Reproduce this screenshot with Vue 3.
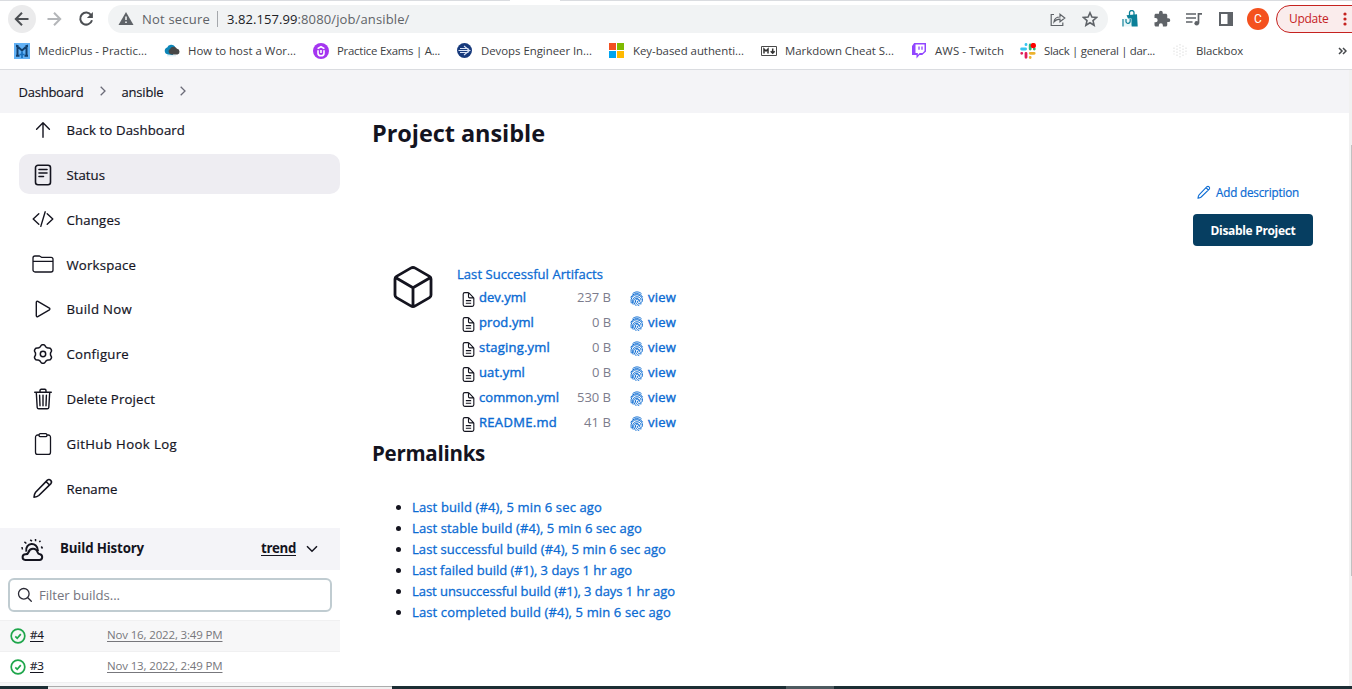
<script setup>
// Tightens or loosens a label so that it occupies its designed width.
const vFit = {
  mounted(el, { value }) {
    const n = el.textContent.trim().length
    el.style.letterSpacing = (value - el.getBoundingClientRect().width) / n + 'px'
  },
}

const gear = (() => {
  const pts = []
  for (let i = 0; i < 72; i++) {
    const t = (i / 72) * Math.PI * 2
    const r = 8.4 + 1.0 * Math.tanh(1.6 * Math.cos(6 * t))
    pts.push((12 + r * Math.sin(t)).toFixed(2) + ' ' + (12 - r * Math.cos(t)).toFixed(2))
  }
  return 'M' + pts.join('L') + 'Z M12 9.3a2.7 2.7 0 100 5.4 2.7 2.7 0 000-5.4z'
})()

const pencil = 'M3 21.2c.2-2.2.6-3.8 1.6-5L16.400 4.100a2.500 2.500 0 013.500 3.500L7.800 19.500c-1.200 1-2.700 1.500-4.800 1.700z M15 5.500l3.500 3.500'

const bookmarks = [
  { icon: 'medic', label: 'MedicPlus - Practic...', w: 109 },
  { icon: 'cloud', label: 'How to host a Wor...', w: 108 },
  { icon: 'udemy', label: 'Practice Exams | A...', w: 103 },
  { icon: 'devops', label: 'Devops Engineer In...', w: 111 },
  { icon: 'ms', label: 'Key-based authenti...', w: 111 },
  { icon: 'md', label: 'Markdown Cheat S...', w: 109 },
  { icon: 'twitch', label: 'AWS - Twitch', w: 69 },
  { icon: 'slack', label: 'Slack | general | dar...', w: 111 },
  { icon: 'blackbox', label: 'Blackbox', w: 47 },
]

const tasks = [
  { label: 'Back to Dashboard', w: 118.5, d: 'M5.600 11.300L12 4.800l6.400 6.500M12 5v14.300' },
  { label: 'Status', w: 38.5, active: true, sw: 1.6, d: 'M7 2.300h10a2.500 2.500 0 012.500 2.500v14.400a2.500 2.500 0 01-2.500 2.500H7a2.500 2.500 0 01-2.500-2.500V4.800A2.500 2.500 0 017 2.300z M8 6.500h8M8 10h8M8 13.500h4.500' },
  { label: 'Changes', w: 54, d: 'M7.800 17.200L2.200 12l5.600-5.200M16.200 17.200l5.600-5.200-5.600-5.200M14.200 4.800L9.800 19.400' },
  { label: 'Workspace', w: 69.5, sw: 1.3, d: 'M2 18V6a2 2 0 012-2h4.500l2 1.300H20a2 2 0 012 2V18a2 2 0 01-2 2H4a2 2 0 01-2-2z M2 9.300h20' },
  { label: 'Build Now', w: 65.5, d: 'M5.300 5.200v13.600c0 .8.800 1.300 1.500.900l11.600-6.900c.6-.4.6-1.200 0-1.600L6.800 4.300c-.7-.4-1.500.1-1.500.900z' },
  { label: 'Configure', w: 62.5, sw: 1.5, d: gear },
  { label: 'Delete Project', w: 88.5, d: 'M5.300 5.500l.9 15c.1.900.7 1.300 1.500 1.300h8.600c.8 0 1.400-.5 1.500-1.300l.9-15M3.700 5.200h16.600M9 5V3.400c0-.6.500-1.100 1.100-1.100h3.800c.6 0 1.100.5 1.100 1.100V5M12 8.300v10.400M8.600 8.300l.4 10.400M15.400 8.300l-.4 10.400' },
  { label: 'GitHub Hook Log', w: 110.5, sw: 1.3, d: 'M15.800 3h1.500a2.200 2.200 0 012.200 2.200v15a2.200 2.200 0 01-2.200 2.200H6.700a2.200 2.200 0 01-2.200-2.200v-15A2.200 2.200 0 016.700 3h1.500M9.300 1.700h5.400a1.200 1.200 0 011.200 1.200v.6a1.200 1.200 0 01-1.200 1.200H9.300a1.200 1.200 0 01-1.200-1.200v-.6a1.200 1.200 0 011.200-1.200z' },
  { label: 'Rename', w: 51, sw: 1.6, d: pencil },
]

const files = [
  { name: 'dev.yml', w: 47, size: '237 B', sw: 34 },
  { name: 'prod.yml', w: 55, size: '0 B', sw: 19 },
  { name: 'staging.yml', w: 71, size: '0 B', sw: 19 },
  { name: 'uat.yml', w: 46, size: '0 B', sw: 19 },
  { name: 'common.yml', w: 80, size: '530 B', sw: 34 },
  { name: 'README.md', w: 78, size: '41 B', sw: 27 },
]

const links = [
  { label: 'Last build (#4), 5 min 6 sec ago', w: 190 },
  { label: 'Last stable build (#4), 5 min 6 sec ago', w: 230 },
  { label: 'Last successful build (#4), 5 min 6 sec ago', w: 254 },
  { label: 'Last failed build (#1), 3 days 1 hr ago', w: 220 },
  { label: 'Last unsuccessful build (#1), 3 days 1 hr ago', w: 263 },
  { label: 'Last completed build (#4), 5 min 6 sec ago', w: 259 },
]

const builds = [
  { id: '#4', date: 'Nov 16, 2022, 3:49 PM' },
  { id: '#3', date: 'Nov 13, 2022, 2:49 PM' },
]
</script>

<template>
  <div class="screen">
    <header class="chrome">
      <div class="tabline"><i class="tab"></i></div>
      <div class="toolbar">
        <span class="round">
          <svg width="28" height="28" viewBox="0 0 28 28" class="nav"><path d="M20.500 14H8.500M14 7.800L7.800 14l6.200 6.200" /></svg>
        </span>
        <svg width="28" height="28" viewBox="0 0 28 28" class="nav fwd"><path d="M7.500 14h12M14 7.800l6.200 6.200-6.200 6.200" /></svg>
        <svg width="28" height="28" viewBox="0 0 28 28" class="nav reload"><path d="M19.200 10.200A6 6 0 1020 15.300" /><path class="solid" d="M20.900 7v6h-6z" /></svg>
        <div class="omnibox">
          <svg width="16" height="14" viewBox="0 0 16 14" class="warn"><path fill="#5f6368" d="M8 0l7.500 13H.5z" /><path stroke="#f1f3f4" stroke-width="1.600" d="M8 4.500V8M8 9.500v1.600" /></svg>
          <span class="notsecure"><span v-fit="68" class="t">Not secure</span></span>
          <i class="bar"></i>
          <span class="url"><b v-fit="70.500" class="t">3.82.157.99</b><span v-fit="112" class="t">:8080/job/ansible/</span></span>
          <svg width="16" height="16" viewBox="0 0 16 16" class="share"><path d="M4 3.500H1.200v11h11.600v-3M4 11c.3-3.500 2.500-5 6-5V3.200L14.800 7 10 10.800V8.200C7.300 8.200 5.500 9 4 11z" /></svg>
          <svg width="16" height="16" viewBox="0 0 16 16" class="star"><path d="M8 1.800l1.900 4.300 4.600.4-3.500 3.100 1.100 4.600L8 11.700l-4.100 2.500 1.100-4.600L1.500 6.500l4.600-.4z" /></svg>
        </div>
        <svg class="ext e1" width="18" height="18" viewBox="0 0 18 18"><path fill="#0b8098" d="M5.500 5.300l10.500-1 .7 12.200h-6z" /><path fill="none" stroke="#0b8098" stroke-width="1.300" d="M8.500 6V3a2 2 0 014.500-.5V6" /><path fill="#e8f6f8" d="M3 8.500h7.500v8H3z" /><path fill="none" stroke="#0b8098" stroke-width="1.200" d="M2 9v7.500M5 9v2.500c0 2.500 4.200 2.500 4.200-.5V9" /></svg>
        <svg class="ext e2" width="18" height="18" viewBox="0 0 24 24"><path fill="#5f6368" d="M20.500 11H19V7c0-1.100-.9-2-2-2h-4V3.500a2.500 2.500 0 00-5 0V5H4c-1.100 0-2 .9-2 2v3.800h1.500a2.700 2.700 0 010 5.400H2V20c0 1.100.9 2 2 2h3.800v-1.500a2.700 2.700 0 015.400 0V22H17c1.100 0 2-.9 2-2v-4h1.500a2.500 2.500 0 000-5z" /></svg>
        <svg class="ext e3" width="18" height="16" viewBox="0 0 18 16"><path fill="none" stroke="#5f6368" stroke-width="1.700" d="M1 3h10M1 7h10M1 11h6.500M13.500 12.500V2.800H17" /><circle cx="11.700" cy="12.300" r="2.300" fill="#5f6368" /></svg>
        <svg class="ext e4" width="14" height="14" viewBox="0 0 14 14"><path fill="none" stroke="#5f6368" stroke-width="2" d="M1 1h12v12H1z" /><path fill="#5f6368" d="M8.500 1H13v12H8.500z" /></svg>
        <span class="avatar">C</span>
        <span class="update"><span v-fit="39.500" class="t">Update</span><svg width="4" height="14" viewBox="0 0 4 14"><g fill="#c5221f"><circle cx="2" cy="2" r="1.600" /><circle cx="2" cy="7" r="1.600" /><circle cx="2" cy="12" r="1.600" /></g></svg></span>
      </div>
      <nav class="bookmarks">
        <span v-for="b in bookmarks" :key="b.label" class="bookmark">
          <svg width="16" height="16" viewBox="0 0 16 16">
            <template v-if="b.icon === 'medic'"><path fill="#62b1f5" d="M0 0h16v16H0z" /><path fill="none" stroke="#123f6d" stroke-width="2" d="M3.500 13V3.500L8 7.500l4.500-4V13M2 3h2.500M11.500 3H14M2 12.800h3.500M10.500 12.800H14" /><path stroke="#176fbd" stroke-width="1.700" d="M8 8.500V15M5.500 11.500h5" /></template>
            <template v-else-if="b.icon === 'cloud'"><path fill="#0c86b8" d="M4 11.500a3.600 3.600 0 01-.8-7A4.500 4.500 0 0111 3.500L9 12z" /><path fill="#474747" d="M7 11.500a3 3 0 01-1-5.500 4 4 0 017-.3 3 3 0 01.5 5.800z" /><path stroke="#d3eaf3" d="M3 12.800h9" /></template>
            <template v-else-if="b.icon === 'udemy'"><circle cx="8" cy="8" r="8" fill="#a435f0" /><path fill="none" stroke="#fff" stroke-width="1.600" d="M5 7.300v2.900c0 3.400 6 3.400 6 0V7.300M4.600 5.600L8 3.700l3.400 1.900M8 7v3" /></template>
            <template v-else-if="b.icon === 'devops'"><circle cx="7.500" cy="7.500" r="7.500" fill="#173a7c" /><path fill="none" stroke="#d9e3f5" stroke-width="1.100" d="M1.500 7.500h12M3 5.500h8.500M3 9.500h8.500M7 3l5.500 4.500L7 12" /></template>
            <template v-else-if="b.icon === 'ms'"><path fill="#f25022" d="M0 0h7v7H0z" /><path fill="#7fba00" d="M8 0h7v7H8z" /><path fill="#00a4ef" d="M0 8h7v7H0z" /><path fill="#ffb900" d="M8 8h7v7H8z" /></template>
            <template v-else-if="b.icon === 'md'"><path fill="#fff" stroke="#4a4a4a" d="M.5 3.500h15v9H.5z" /><path fill="none" stroke="#333" stroke-width="1.500" d="M3 10.500V6l2 2 2-2v4.500M11.700 5.500V10M9.700 8.200l2 2 2-2" /></template>
            <template v-else-if="b.icon === 'twitch'"><path fill="#9146ff" d="M3.200 0H15v8.500L11.200 12H8.500l-3 3.500V12H1V3z" /><path fill="#fff" d="M4.500 1.500h9V8l-2 2H8.700l-1.900 1.900V10H4.500z" /><path stroke="#9146ff" stroke-width="1.300" d="M8 3.500v3.200M11 3.500v3.200" /></template>
            <template v-else-if="b.icon === 'slack'"><g fill="none" stroke-width="2.800" stroke-linecap="round"><path stroke="#36c5f0" d="M1.600 6h4M6 1.500v.2" /><path stroke="#2eb67d" d="M10.200 2v4M14.300 6v.1" /><path stroke="#ecb22e" d="M10.200 10.300h4M10.200 14.400v.1" /><path stroke="#e01e5a" d="M6 10.300v4M1.700 10.300h.1" /></g><circle cx="13.300" cy="2.600" r="2.700" fill="#f00" /></template>
            <template v-else><path fill="none" stroke="#e8e8e8" stroke-width="1.400" stroke-dasharray="1.500 1.500" d="M8 1v14M5 2.500v11M11 2.500v11M2 4.500v7M14 4.500v7" /></template>
          </svg>
          <span v-fit="b.w" class="t">{{ b.label }}</span>
        </span>
        <svg class="more" width="9" height="8" viewBox="0 0 9 8"><path d="M1 1l3 3-3 3M5 1l3 3-3 3" /></svg>
      </nav>
    </header>

    <div class="page">
      <div class="crumbs">
        <span v-fit="65" class="t">Dashboard</span>
        <svg width="6" height="10" viewBox="0 0 6 10"><path d="M.7.700L5 5 .7 9.300" /></svg>
        <span v-fit="42" class="t">ansible</span>
        <svg width="6" height="10" viewBox="0 0 6 10"><path d="M.7.700L5 5 .7 9.300" /></svg>
      </div>
      <div class="body">
        <aside>
          <div class="tasks">
            <div v-for="t in tasks" :key="t.label" class="task" :class="{ active: t.active }">
              <svg width="24" height="24" viewBox="0 0 24 24" :stroke-width="t.sw || 1.4"><path :d="t.d" /></svg>
              <span v-fit="t.w" class="t">{{ t.label }}</span>
            </div>
          </div>
          <div class="history">
            <svg width="24" height="24" viewBox="0 0 24 24" class="weather"><path d="M5.300 22h14.200a2.900 2.900 0 00.5-5.700c-1.600-.1-2-.6-2.300-1.700-1.400-5-7.800-5-9.100-.5-.4 1.500-1.100 2-2.900 2.100a2.900 2.900 0 00-.4 5.800z" /><path d="M6.300 13.600C4.700 4.300 17.600 3 18 13" /><path class="rays" d="M10.200 1.800L12 3.200M15.500 1l.1 2.200M4.400 3.900l2 1.600M19.300 4l1.200-1.200M2 9l.4 2.500M21.300 8.500l1.200 2" /></svg>
            <span v-fit="84" class="t title">Build History</span>
            <span v-fit="35" class="t trend">trend</span>
            <svg width="12" height="8" viewBox="0 0 12 8" class="down"><path d="M1 1.300l5 5 5-5" /></svg>
          </div>
          <div class="filter">
            <svg width="16" height="16" viewBox="0 0 16 16"><circle cx="6.800" cy="6.800" r="5.300" /><path d="M10.800 10.800l3.500 3.500" /></svg>
            <span v-fit="81" class="t">Filter builds...</span>
          </div>
          <div v-for="(b, i) in builds" :key="b.id" class="build" :class="{ shaded: i % 2 === 0 }">
            <svg width="16" height="16" viewBox="0 0 16 16"><circle cx="8" cy="8" r="6.800" /><path d="M5.300 8.400l1.900 1.900 3.600-4.200" /></svg>
            <span v-fit="13.500" class="t id">{{ b.id }}</span>
            <span v-fit="115.500" class="t date">{{ b.date }}</span>
          </div>
          <div class="build shaded"></div>
        </aside>
        <main>
          <h1><span v-fit="173" class="t">Project ansible</span></h1>
          <div class="actions">
            <a class="add"><svg width="16" height="16" viewBox="0 0 24 24"><path :d="pencil" /></svg><span v-fit="83" class="t">Add description</span></a>
            <button><span v-fit="85" class="t">Disable Project</span></button>
          </div>
          <section class="artifacts">
            <svg class="cube" width="48" height="48" viewBox="0 0 512 512"><path d="M448 341.370V170.610A32 32 0 00432.110 143l-152-88.460a47.940 47.940 0 00-48.240 0L79.890 143A32 32 0 0064 170.610v170.760A32 32 0 0079.890 369l152 88.460a48 48 0 0048.240 0l152-88.460A32 32 0 00448 341.370zM69 154l187 110 187-110M256 464V264" /></svg>
            <div>
              <div class="arthead"><span v-fit="146" class="t">Last Successful Artifacts</span></div>
              <div v-for="f in files" :key="f.name" class="file">
                <svg width="17" height="17" viewBox="0 0 512 512" class="doc"><path d="M416 221V416a48 48 0 01-48 48H144a48 48 0 01-48-48V96a48 48 0 0148-48h98.750a32 32 0 0122.620 9.370l141.260 141.260A32 32 0 01416 221zM256 56v120a32 32 0 0032 32h120M176 288h160M176 368h160" /></svg>
                <span class="name"><span v-fit="f.w" class="t">{{ f.name }}</span></span>
                <span class="size"><span v-fit="f.sw" class="t">{{ f.size }}</span></span>
                <svg width="14" height="16" viewBox="0 0 14 16" class="finger"><path d="M2.500 2.800C5 .3 9.200.3 11.600 2.900M.8 6.500C2.500 1.900 10 .9 12.600 6.200M1.300 12.300C.8 9.500.8 7 3.200 5c3.300-2.700 9.400-.8 9.300 4.500 0 2.500-3.300 2.200-3.500.3-.2-2.300-3.600-2.200-3.600.2 0 2 1.600 4 3.800 4.500M3.200 13.600C1.500 9.700 3 5.800 7 5.800c3.500 0 4 2.500 4 3.700M6.300 14.900C4.300 13 3.400 11 3.700 9.500 4.200 6.800 9.300 6.500 9.400 10M7.200 9.800c0 2.500 2 3.400 4.300 3" /></svg>
                <span v-fit="28" class="t view">view</span>
              </div>
            </div>
          </section>
          <h2><span v-fit="113" class="t">Permalinks</span></h2>
          <ul>
            <li v-for="l in links" :key="l.label"><a v-fit="l.w" class="t">{{ l.label }}</a></li>
          </ul>
        </main>
      </div>
      <div class="scroll"><i></i></div>
    </div>
    <div class="taskbar"><i class="search"></i><i class="slot"></i></div>
  </div>
</template>

<style>
body { overflow: hidden; background: #fff; }
</style>

<style scoped>
.screen { width: 1352px; height: 689px; display: flex; flex-direction: column; background: #fff; font-family: "Open Sans", "Noto Sans", sans-serif; color: #14141f; overflow: hidden; }
.screen svg { flex: none; display: block; }
.t { display: inline-block; white-space: nowrap; flex: none; }
.chrome { height: 70px; box-sizing: border-box; border-bottom: 1px solid #dadce0; flex: none; display: flex; flex-direction: column; }
.tabline { height: 1px; background: #dadce0; padding-left: 510px; }
.tab { display: block; width: 50px; height: 1px; background: #fff; }
.toolbar { height: 36px; display: flex; align-items: center; padding-left: 8px; }
.round { border-radius: 50%; background: #ebebec; flex: none; }
.nav { fill: none; stroke: #4c4f53; stroke-width: 2; }
.fwd { stroke: #b4b6b9; margin-left: 4px; }
.reload { margin-left: 4px; stroke: #4c4f53; }
.solid { fill: #4c4f53; stroke: none; }
.omnibox { flex: none; margin-left: 8px; width: 1000px; box-sizing: border-box; height: 28px; border-radius: 14px; background: #f1f3f4; display: flex; align-items: center; padding-left: 10px; font-size: 13px; color: #5f6368; line-height: 28px; }
.notsecure { margin-left: 8px; width: 75px; }
.bar { width: 1px; height: 16px; background: #a5a8ac; }
.url { margin-left: 9px; flex: 1; display: flex; }
.url b { font-weight: 400; color: #202124; }
.share, .star { fill: none; stroke: #5f6368; stroke-width: 1.2; }
.star { stroke-width: 1.6; margin: 0 10px 0 16px; }
.e1 { margin-left: 13px; }
.e2 { margin-left: 14px; }
.e3 { margin-left: 14px; }
.e4 { margin-left: 16px; }
.avatar { margin-left: 14px; width: 22px; height: 22px; border-radius: 50%; background: #f4511e; color: #fff; font: 12px/22px Roboto, sans-serif; text-align: center; flex: none; }
.update { margin-left: 7px; width: 90px; height: 28px; box-sizing: border-box; border: 1px solid #c5221f; border-radius: 14px; background: #faecec; color: #c5221f; font-size: 12px; line-height: 26px; display: flex; align-items: center; padding-left: 12px; gap: 14px; flex: none; }
.bookmarks { height: 28px; display: flex; align-items: center; padding-left: 14px; font-size: 11.4px; color: #3c4043; }
.bookmark { display: flex; align-items: center; gap: 8px; margin-right: 17px; line-height: 20px; flex: none; }
.bookmark:nth-child(7) { margin-right: 16px; }
.more { margin-left: auto; margin-right: 5px; fill: none; stroke: #45484b; stroke-width: 1.5; }
.page { height: 616px; flex: none; position: relative; display: flex; flex-direction: column; }
.crumbs { height: 43px; flex: none; box-sizing: border-box; background: #f4f4f7; display: flex; align-items: center; padding-left: 18.5px; font-size: 13px; gap: 16px; line-height: 20px; -webkit-text-stroke: 0.15px; }
.crumbs svg { fill: none; stroke: #6b6b78; stroke-width: 1.3; margin-bottom: 2px; }
.body { height: 573px; display: flex; overflow: hidden; }
aside { width: 340px; flex: none; }
.tasks { margin-top: -3.8px; padding-left: 19px; display: grid; row-gap: 4.85px; height: 418.800px; align-content: start; }
.task { height: 40px; border-radius: 10px; display: flex; align-items: center; padding-left: 12px; gap: 11.5px; font-size: 13.2px; line-height: 20px; -webkit-text-stroke: 0.2px; }
.task .t { padding-top: 1.8px; }
.task.active { background: #eeedf2; }
.task svg { margin-top: 1px; fill: none; stroke: #14141f; stroke-linecap: round; stroke-linejoin: round; }
.history { height: 42px; background: #f4f4f8; display: flex; align-items: center; padding-left: 20px; font-size: 13.3px; font-weight: 700; line-height: 18px; }
.history .t { padding-bottom: 2px; }
.weather { margin-top: 2px; fill: none; stroke: #14141f; stroke-width: 2; }
.rays { stroke-width: 1.5; }
.title { margin-left: 16px; }
.trend { margin-left: auto; text-decoration: underline; text-underline-offset: 2px; }
.down { margin: 0 22px 0 10px; fill: none; stroke: #14141f; stroke-width: 1.5; }
.filter { margin: 8px 8px 8px; height: 34px; box-sizing: border-box; border: 2px solid #c0ccd1; border-radius: 6px; display: flex; align-items: center; padding-left: 7px; gap: 6px; font-size: 13.2px; color: #757580; }
.filter svg { fill: none; stroke: #2a2a35; stroke-width: 1.3; stroke-linecap: round; }
.build { height: 31px; box-sizing: border-box; border-top: 1px solid #f0f0f1; display: flex; align-items: center; padding-left: 10px; font-size: 11.5px; line-height: 18px; }
.shaded { background: #f7f7f8; }
.build svg { fill: none; stroke: #1ea64b; stroke-width: 1.7; }
.build .t { padding-bottom: 2px; }
.id { margin-left: 4px; text-decoration: underline; text-underline-offset: 2px; -webkit-text-stroke: 0.15px; }
.date { margin-left: 63.500px; color: #77777c; text-decoration: underline; text-underline-offset: 2px; }
main { width: 941px; margin-left: 32px; display: flex; flex-direction: column; }
h1 { margin: 2px 0 0; font-size: 23.5px; line-height: 36px; font-weight: 700; height: 36px; }
.actions { display: flex; flex-direction: column; align-items: flex-end; margin-top: 31px; }
.add { display: flex; align-items: center; gap: 4px; font-size: 11.7px; line-height: 20px; height: 20px; color: #0b6bd3; margin-right: 14px; -webkit-text-stroke: 0.2px; }
.add svg { fill: none; stroke: #0b6bd3; stroke-width: 1.6; }
button { margin-top: 12px; width: 120px; height: 32px; padding: 2px 0 0; border: 0; border-radius: 4px; background: #063e61; color: #fff; font: 700 12px/30px "Open Sans", sans-serif; }
.artifacts { margin-top: 17px; padding-left: 17px; display: flex; align-items: flex-start; gap: 20px; height: 172px; }
.cube { fill: none; stroke: #14141f; stroke-width: 30; stroke-linejoin: round; }
.arthead { color: #0b6bd3; font-size: 13px; line-height: 22px; height: 22px; -webkit-text-stroke: 0.3px; }
.file { height: 25px; display: flex; align-items: center; font-size: 13px; line-height: 20px; padding-left: 3px; }
.file .t { padding-bottom: 2px; }
.doc { fill: none; stroke: #14141f; stroke-width: 34; stroke-linejoin: round; margin-top: 4px; }
.name { width: 80px; margin-left: 2px; color: #0b6bd3; -webkit-text-stroke: 0.4px; }
.size { width: 52px; text-align: right; color: #7c7c8c; }
.finger { margin-left: 19px; fill: none; stroke: #0b6bd3; stroke-width: 1; margin-top: 2px; }
.view { margin-left: 4px; color: #0b6bd3; -webkit-text-stroke: 0.4px; }
h2 { margin: 2px 0 0; font-size: 20.5px; line-height: 32px; height: 32px; font-weight: 700; }
ul { margin: 28px 0 0; padding: 0 0 0 40px; font-size: 13px; line-height: 21px; }
li { height: 21px; }
li a { color: #0b6bd3; -webkit-text-stroke: 0.3px; }
.scroll { position: absolute; right: 0; top: 0; width: 3px; height: 616px; background: #f1f1f1; }
.scroll i { display: block; margin: 75px 0 0 2px; height: 431px; background: #c1c1c1; }
.taskbar { height: 3px; background: #1c2e34; display: flex; }
.search { margin-left: 48px; width: 344px; height: 3px; box-sizing: border-box; background: #f0f0f0; border-top: 1px solid #acacac; }
.slot { margin-left: 394px; width: 48px; background: #4e5b60; }
</style>
